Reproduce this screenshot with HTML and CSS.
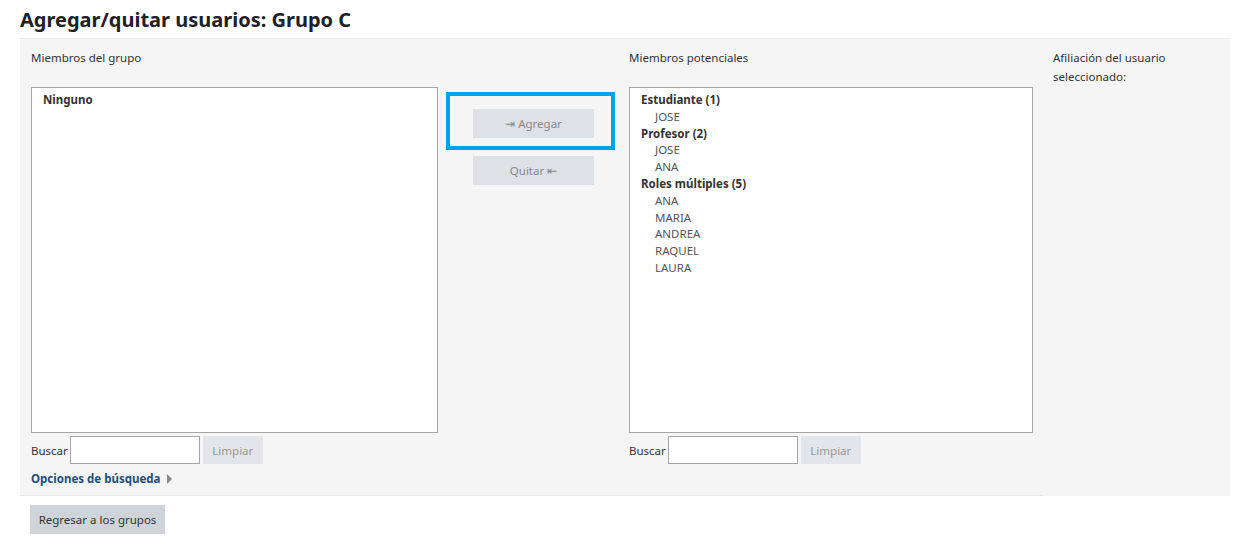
FILE: index.html
```html
<!DOCTYPE html>
<html lang="es">
<head>
    <meta charset="UTF-8">
    <title>Agregar/quitar usuarios: Grupo C</title>
    <link rel="stylesheet" href="styles.css">
</head>
<body>
    <h2 class="page-title">Agregar/quitar usuarios: Grupo C</h2>

    <div class="panel">
        <div class="panel-main">
            <div class="cols">
                <div class="col">
                    <div class="col-label">Miembros del grupo</div>
                    <div class="select-box">
                        <div class="optgroup">Ninguno</div>
                    </div>
                    <div class="search-row">
                        <span>Buscar</span>
                        <input type="text" class="search-input">
                        <button class="btn btn-clear">Limpiar</button>
                    </div>
                </div>

                <div class="col col-middle">
                    <div class="highlight">
                        <button class="btn btn-move">&#8677; Agregar</button>
                    </div>
                    <button class="btn btn-move btn-remove">Quitar &#8676;</button>
                </div>

                <div class="col">
                    <div class="col-label">Miembros potenciales</div>
                    <div class="select-box select-right">
                        <div class="optgroup">Estudiante (1)</div>
                        <div class="option">JOSE</div>
                        <div class="optgroup">Profesor (2)</div>
                        <div class="option">JOSE</div>
                        <div class="option">ANA</div>
                        <div class="optgroup">Roles múltiples (5)</div>
                        <div class="option">ANA</div>
                        <div class="option">MARIA</div>
                        <div class="option">ANDREA</div>
                        <div class="option">RAQUEL</div>
                        <div class="option">LAURA</div>
                    </div>
                    <div class="search-row">
                        <span>Buscar</span>
                        <input type="text" class="search-input">
                        <button class="btn btn-clear">Limpiar</button>
                    </div>
                </div>
            </div>

            <a href="#" class="search-options">Opciones de búsqueda <span class="caret"></span></a>
        </div>

        <div class="panel-aside">
            Afiliación del usuario<br>seleccionado:
        </div>
    </div>

    <div class="actions">
        <button class="btn btn-back">Regresar a los grupos</button>
    </div>
</body>
</html>
```

FILE: styles.css
```css
body {
    font-family: 'Noto Sans', 'Open Sans', sans-serif;
    font-size: 11.5px;
    margin: 0;
    padding: 0 17px 0 20px;
    background-color: #fff;
    color: #333;
}

.page-title {
    font-size: 20px;
    font-weight: bold;
    color: #1d2125;
    margin: 0;
    padding-top: 8px;
    height: 30px;
    line-height: 24px;
}

.panel {
    display: flex;
    background-color: #f5f5f5;
    border-top: 1px solid #ececec;
}

.panel-main {
    width: 1023px;
    padding: 9px 0 0 11px;
    box-sizing: border-box;
    border-bottom: 1px solid #e8e8e8;
}

.panel-aside {
    flex: 1;
    padding: 9px 10px;
    line-height: 19px;
}

.cols {
    display: grid;
    grid-template-columns: 407px 191px 404px;
}

.col-label {
    line-height: 20px;
    margin-bottom: 19px;
}

.select-box {
    height: 340px;
    background-color: #fff;
    border: 1px solid #a6a6a6;
    padding-top: 4px;
    box-sizing: content-box;
    margin-bottom: 3px;
}

.optgroup {
    font-weight: bold;
    line-height: 16.8px;
    padding-left: 11px;
}

.option {
    line-height: 16.8px;
    padding-left: 25px;
    color: #555;
}

.search-row {
    display: flex;
    align-items: center;
    gap: 3px;
    height: 28px;
}

.search-row span {
    margin-right: -1px;
}

.search-input {
    width: 130px;
    height: 28px;
    box-sizing: border-box;
    border: 1px solid #a6a6a6;
    margin: 0;
}

.btn {
    font-family: inherit;
    font-size: 11.5px;
    border: none;
    margin: 0;
    padding: 0;
    cursor: pointer;
}

.btn-clear {
    width: 60px;
    height: 28px;
    background-color: #e2e5e9;
    color: #999;
}

.col-middle {
    padding-top: 44px;
}

.highlight {
    width: 169px;
    height: 58px;
    box-sizing: border-box;
    border: 4px solid #00a3e8;
    margin-left: 8px;
    padding: 13px 0 0 23px;
}

.btn-move {
    width: 121px;
    height: 29px;
    background-color: #dee2e6;
    color: #888;
}

.btn-remove {
    margin: 6px 0 0 35px;
}

.search-options {
    display: inline-block;
    margin: 5px 0 6px;
    line-height: 20px;
    font-weight: bold;
    color: #1f4d7a;
    text-decoration: none;
}

.caret {
    display: inline-block;
    width: 0;
    height: 0;
    margin-left: 4px;
    border-top: 5px solid transparent;
    border-bottom: 5px solid transparent;
    border-left: 5px solid #8a8a8a;
    vertical-align: -1px;
}

.actions {
    padding: 9px 0 0 10px;
}

.btn-back {
    width: 135px;
    height: 29px;
    background-color: #ced4da;
    color: #333;
}
```
